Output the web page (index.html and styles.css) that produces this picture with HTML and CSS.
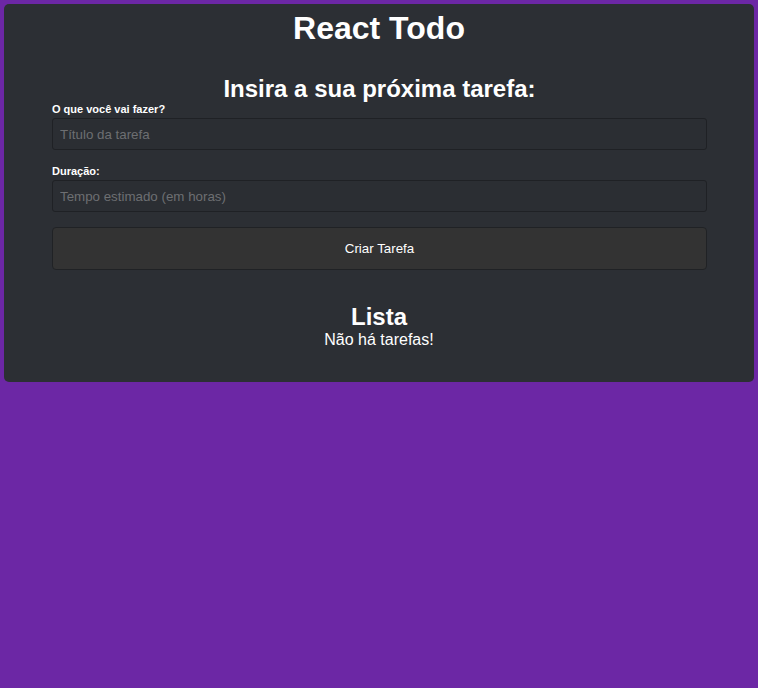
FILE: index.html
```html
<!DOCTYPE html>
<html lang="pt">
<head>
<meta charset="utf-8">
<title>React Todo</title>
<link rel="stylesheet" href="styles.css">
</head>
<body>
<div class="app">
  <h1 class="title">React Todo</h1>
  <div class="form-wrap">
    <h2 class="subtitle">Insira a sua próxima tarefa:</h2>
    <form class="form">
      <div class="field">
        <label class="label" for="title">O que você vai fazer?</label>
        <input class="input" id="title" type="text" placeholder="Título da tarefa">
      </div>
      <div class="field">
        <label class="label" for="time">Duração:</label>
        <input class="input" id="time" type="text" placeholder="Tempo estimado (em horas)">
      </div>
      <button class="button" type="button">Criar Tarefa</button>
    </form>
  </div>
  <div class="list">
    <h2 class="list-title">Lista</h2>
    <p class="empty">Não há tarefas!</p>
  </div>
</div>
</body>
</html>
```

FILE: styles.css
```css
html, body {
  margin: 0;
  padding: 0;
}
body {
  background: #6c27a5;
  font-family: "Liberation Sans", Arial, sans-serif;
  color: #fff;
  padding: 4px;
  min-height: 688px;
  box-sizing: border-box;
}
.app {
  background: #2c2f34;
  border-radius: 5px;
  padding: 6px 0 33px;
  text-align: center;
}
.title {
  margin: 0;
  font-size: 32px;
  line-height: 37px;
}
.form-wrap {
  margin: 0 47px 0 48px;
  padding-top: 28px;
}
.subtitle {
  margin: 0;
  font-size: 24px;
  line-height: 28px;
}
.form {
  display: flex;
  flex-direction: column;
  text-align: left;
}
.field {
  display: flex;
  flex-direction: column;
  margin-bottom: 15px;
}
.label {
  font-size: 11px;
  font-weight: bold;
  line-height: 13px;
  margin-bottom: 2px;
}
.input {
  height: 32px;
  box-sizing: border-box;
  background: #2b2e33;
  border: 1px solid #1f2125;
  border-radius: 3px;
  color: #fff;
  font-family: "Liberation Sans", Arial, sans-serif;
  font-size: 13.33px;
  padding: 0 7px;
  outline: none;
}
.input::placeholder {
  color: #6d6f72;
}
.button {
  height: 43px;
  background: #333333;
  border: 1px solid #202225;
  border-radius: 4px;
  color: #fff;
  font-family: "Liberation Sans", Arial, sans-serif;
  font-size: 13.33px;
}
.list {
  padding-top: 34px;
}
.list-title {
  margin: 0;
  font-size: 24px;
  line-height: 26px;
}
.empty {
  margin: 1px 0 0;
  font-size: 16px;
  line-height: 18px;
}
```
